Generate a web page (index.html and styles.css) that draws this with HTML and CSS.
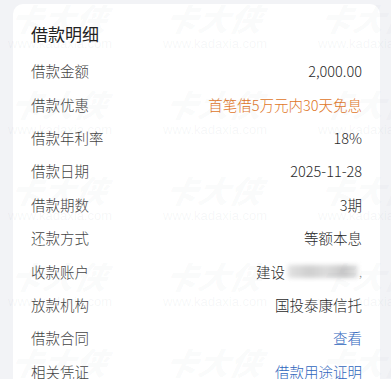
FILE: index.html
```html
<!DOCTYPE html>
<html lang="zh">
<head>
<meta charset="utf-8">
<link rel="stylesheet" href="styles.css">
</head>
<body>
<div class="page">
  <div class="card">
    <div class="title">借款明细</div>
    <div class="row"><span class="label">借款金额</span><span class="value">2,000.00</span></div>
    <div class="row"><span class="label">借款优惠</span><span class="value orange">首笔借5万元内30天免息</span></div>
    <div class="row"><span class="label">借款年利率</span><span class="value">18%</span></div>
    <div class="row"><span class="label">借款日期</span><span class="value">2025-11-28</span></div>
    <div class="row"><span class="label">借款期数</span><span class="value">3期</span></div>
    <div class="row"><span class="label">还款方式</span><span class="value">等额本息</span></div>
    <div class="row"><span class="label">收款账户</span><span class="value account">建设<span class="blur"></span><span class="comma">,</span></span></div>
    <div class="row"><span class="label">放款机构</span><span class="value">国投泰康信托</span></div>
    <div class="row"><span class="label">借款合同</span><span class="value blue">查看</span></div>
    <div class="row"><span class="label">相关凭证</span><span class="value blue">借款用途证明</span></div>
  </div>
  <div class="watermarks">
    <div class="wm" style="left:8px;top:1px"><b>卡大侠</b><i>www.kadaxia.com</i></div>
    <div class="wm" style="left:163px;top:1px"><b>卡大侠</b><i>www.kadaxia.com</i></div>
    <div class="wm" style="left:318px;top:1px"><b>卡大侠</b><i>www.kadaxia.com</i></div>
    <div class="wm" style="left:8px;top:87px"><b>卡大侠</b><i>www.kadaxia.com</i></div>
    <div class="wm" style="left:163px;top:87px"><b>卡大侠</b><i>www.kadaxia.com</i></div>
    <div class="wm" style="left:318px;top:87px"><b>卡大侠</b><i>www.kadaxia.com</i></div>
    <div class="wm" style="left:8px;top:173px"><b>卡大侠</b><i>www.kadaxia.com</i></div>
    <div class="wm" style="left:163px;top:173px"><b>卡大侠</b><i>www.kadaxia.com</i></div>
    <div class="wm" style="left:318px;top:173px"><b>卡大侠</b><i>www.kadaxia.com</i></div>
    <div class="wm" style="left:8px;top:259px"><b>卡大侠</b><i>www.kadaxia.com</i></div>
    <div class="wm" style="left:163px;top:259px"><b>卡大侠</b><i>www.kadaxia.com</i></div>
    <div class="wm" style="left:318px;top:259px"><b>卡大侠</b><i>www.kadaxia.com</i></div>
    <div class="wm" style="left:8px;top:345px"><b>卡大侠</b><i>www.kadaxia.com</i></div>
    <div class="wm" style="left:163px;top:345px"><b>卡大侠</b><i>www.kadaxia.com</i></div>
    <div class="wm" style="left:318px;top:345px"><b>卡大侠</b><i>www.kadaxia.com</i></div>
  </div>
</div>
</body>
</html>
```
FILE: styles.css
```css
html, body {
  margin: 0;
  padding: 0;
  background: #f2f3f6;
  font-family: "Noto Sans CJK SC", "Noto Sans", sans-serif;
}
.page {
  position: relative;
  width: 391px;
  height: 379px;
  overflow: hidden;
}
.card {
  margin: 4px 11px 0 13px;
  background: #ffffff;
  border-radius: 10px 10px 0 0;
  padding: 9px 18px 0 18px;
  height: 400px;
  box-sizing: border-box;
}
.title {
  height: 41px;
  display: flex;
  align-items: center;
  font-size: 17px;
  color: #222;
  font-weight: 400;
}
.row {
  height: 33.4px;
  display: flex;
  align-items: center;
  justify-content: space-between;
  font-size: 14.5px;
  font-weight: 300;
}
.label {
  color: #444;
}
.value {
  color: #2a2a2a;
}
.orange {
  color: #e0761f;
}
.blue {
  color: #2f66bd;
}
.account {
  display: flex;
  align-items: center;
}
.blur {
  display: inline-block;
  width: 70px;
  height: 13px;
  margin-left: 3px;
  background: linear-gradient(90deg, #e2e2e2, #cfcfcf 30%, #dcdcdc 55%, #c8c8c8 80%, #e4e4e4);
  filter: blur(2px);
}
.comma {
  color: #888;
  font-size: 12px;
  margin-left: 1px;
}
.watermarks {
  position: absolute;
  inset: 0;
  pointer-events: none;
}
.wm {
  position: absolute;
  width: 110px;
  display: flex;
  flex-direction: column;
  align-items: flex-start;
}
.wm b {
  font-size: 31px;
  font-weight: 900;
  font-style: italic;
  color: rgba(120, 130, 150, 0.045);
  letter-spacing: 1px;
  line-height: 34px;
  padding-left: 4px;
  transform: skewX(-12deg);
}
.wm i {
  font-style: normal;
  font-family: "Liberation Sans", sans-serif;
  font-size: 13px;
  color: rgba(120, 130, 150, 0.07);
  line-height: 14px;
  margin-top: 2px;
}
```
